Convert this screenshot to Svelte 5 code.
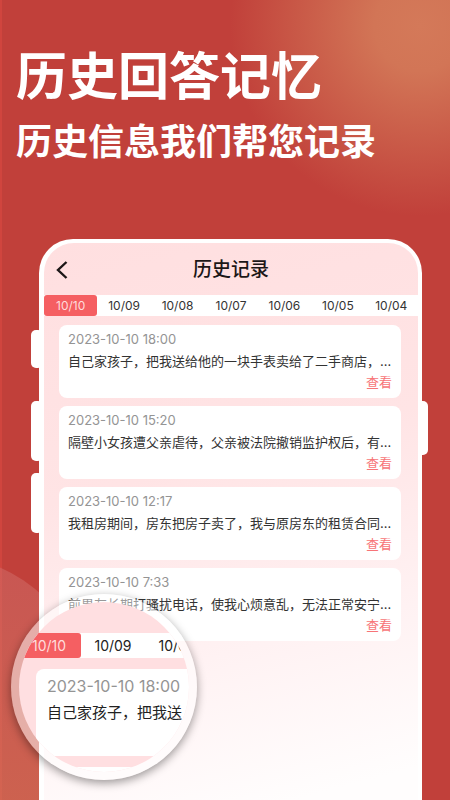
<script>
const tabs = ["10/10", "10/09", "10/08", "10/07", "10/06", "10/05", "10/04"];
const zoomTabs = tabs.slice(0, 3);

const records = [
    { time: "2023-10-10 18:00", text: "自己家孩子，把我送给他的一块手表卖给了二手商店，…" },
    { time: "2023-10-10 15:20", text: "隔壁小女孩遭父亲虐待，父亲被法院撤销监护权后，有…" },
    { time: "2023-10-10 12:17", text: "我租房期间，房东把房子卖了，我与原房东的租赁合同…" },
    { time: "2023-10-10 7:33", text: "前男友长期打骚扰电话，使我心烦意乱，无法正常安宁…" }
];

let active = $state("10/10");
</script>

<main class="page">
    <div class="bubble"></div>

    <header class="intro">
        <h1>历史回答记忆</h1>
        <p>历史信息我们帮您记录</p>
    </header>

    <section class="phone">
        <span class="key mute"></span>
        <span class="key up"></span>
        <span class="key down"></span>
        <span class="key power"></span>

        <div class="screen">
            <div class="bar">
                <button class="back" aria-label="返回">
                    <svg width="12" height="18" viewBox="0 0 12 18" fill="none" stroke="#1c1717" stroke-width="2.4">
                        <path d="M10.5 1 L2 9 L10.5 17" />
                    </svg>
                </button>
                <h2>历史记录</h2>
            </div>

            <nav class="tabs">
                {#each tabs as tab}
                    <button class="tab {active === tab ? "active" : ""}" onclick={() => active = tab}>{tab}</button>
                {/each}
            </nav>

            <ul class="list">
                {#each records as record}
                    <li class="card">
                        <time>{record.time}</time>
                        <p class="text">{record.text}</p>
                        <a class="more" href="#detail">查看</a>
                    </li>
                {/each}
            </ul>
        </div>

        <div class="magnifier">
            <div class="lens">
                <div class="zoom-tabs">
                    {#each zoomTabs as tab, index}
                        <span class="tab {index === 0 ? "active" : ""}">{tab}</span>
                    {/each}
                </div>
                <div class="card zoom-card">
                    <time>{records[0].time}</time>
                    <p class="text">{records[0].text.slice(0, 9)}</p>
                </div>
                <div class="card zoom-card"></div>
            </div>
        </div>
    </section>
</main>

<style>
:global(body) {
    margin: 0;
    background: #c1403a;
}

h1, h2, p, ul {
    margin: 0;
    padding: 0;
}

button {
    margin: 0;
    padding: 0;
    border: 0;
    background: none;
    font: inherit;
    cursor: pointer;
}

.page {
    position: relative;
    display: flex;
    flex-direction: column;
    box-sizing: border-box;
    min-height: 100vh;
    padding: 41px 28px 0 39px;
    overflow: hidden;
    background:
        linear-gradient(90deg, #d0453e 2px, transparent 2px),
        radial-gradient(circle 190px at 420px 26px, #d47959 0%, #d27556 24%, rgba(212, 119, 88, 0) 100%),
        #c1403a;
    font-family: Inter, "Noto Sans CJK SC", sans-serif;
}

.bubble {
    position: absolute;
    top: 555px;
    left: -210px;
    width: 300px;
    height: 300px;
    border-radius: 50%;
    background: linear-gradient(rgba(212, 120, 120, 0.4), rgba(214, 124, 92, 0.6));
}

.intro {
    margin: 0 -28px 0 -23px;
    color: #fff;
    font-family: "Noto Sans CJK SC", sans-serif;
    white-space: nowrap;
}

.intro h1 {
    font-size: 51px;
    line-height: 64px;
    font-weight: 700;
}

.intro p {
    margin-top: 9px;
    font-size: 36px;
    line-height: 50px;
    font-weight: 700;
}

.phone {
    position: relative;
    display: flex;
    flex: 1;
    margin-top: 75px;
    padding: 4px 4px 0 5px;
    border-radius: 34px 34px 0 0;
    background: #fff;
}

.key {
    position: absolute;
    left: -8px;
    width: 12px;
    border-radius: 5px;
    background: #fff;
}

.mute {
    top: 91px;
    height: 38px;
}

.up {
    top: 162px;
    height: 60px;
}

.down {
    top: 234px;
    height: 60px;
}

.power {
    top: 162px;
    right: -6px;
    left: auto;
    height: 54px;
}

.screen {
    position: relative;
    flex: 1;
    min-width: 0;
    border-radius: 30px 30px 0 0;
    background: linear-gradient(165deg, #ffdfe0 0%, #ffe4e5 40%, #fff2f3 70%, #fffdfd 95%);
    overflow: hidden;
}

.bar {
    display: grid;
    grid-template-columns: 36px 1fr 36px;
    align-items: center;
    box-sizing: border-box;
    height: 52px;
    padding-top: 2px;
}

.back {
    display: flex;
    justify-content: flex-end;
    padding: 6px 12px 6px 0;
}

.bar h2 {
    color: #1c1717;
    font-size: 19px;
    line-height: 28px;
    font-weight: 500;
    text-align: center;
}

.tabs {
    display: grid;
    grid-template-columns: repeat(7, 1fr);
    background: #fff;
}

.tab {
    border-radius: 3px;
    color: #333;
    font-size: 12px;
    line-height: 21px;
    text-align: center;
}

.tab.active {
    background: #f55f62;
    color: #ffdcdc;
}

.list {
    display: flex;
    flex-direction: column;
    gap: 8px;
    padding: 9px 17px 0 15px;
    list-style: none;
}

.card {
    display: flex;
    flex-direction: column;
    box-sizing: border-box;
    padding: 4px 9px 7px;
    border-radius: 8px;
    background: #fff;
}

.card time {
    color: #949494;
    font-size: 13px;
    line-height: 20px;
}

.text {
    color: #333;
    font-size: 13px;
    line-height: 24px;
    white-space: nowrap;
}

.more {
    align-self: flex-end;
    color: #f77477;
    font-size: 13px;
    line-height: 18px;
    text-decoration: none;
}

.magnifier {
    position: absolute;
    top: 355px;
    left: -28px;
    box-sizing: border-box;
    width: 186px;
    height: 186px;
    padding: 8px;
    border-radius: 50%;
    background: rgba(255, 255, 255, 0.5);
    box-shadow: 0 3px 10px rgba(0, 0, 0, 0.4);
}

.lens {
    height: 100%;
    padding-top: 31px;
    box-sizing: border-box;
    border-radius: 50%;
    background: #ffdfe1;
    overflow: hidden;
}

.zoom-tabs {
    display: grid;
    grid-template-columns: repeat(3, 64px);
    margin-left: -2px;
    background: #fff;
}

.zoom-tabs .tab {
    color: #222;
    font-size: 14px;
    line-height: 25px;
}

.zoom-tabs .tab.active {
    color: #ffdcdc;
}

.zoom-card {
    height: 87px;
    margin: 11px -40px 0 17px;
    padding: 4px 11px;
}

.zoom-card time {
    font-size: 16px;
    line-height: 26px;
}

.zoom-card .text {
    color: #222;
    font-size: 15px;
    line-height: 28px;
}
</style>
